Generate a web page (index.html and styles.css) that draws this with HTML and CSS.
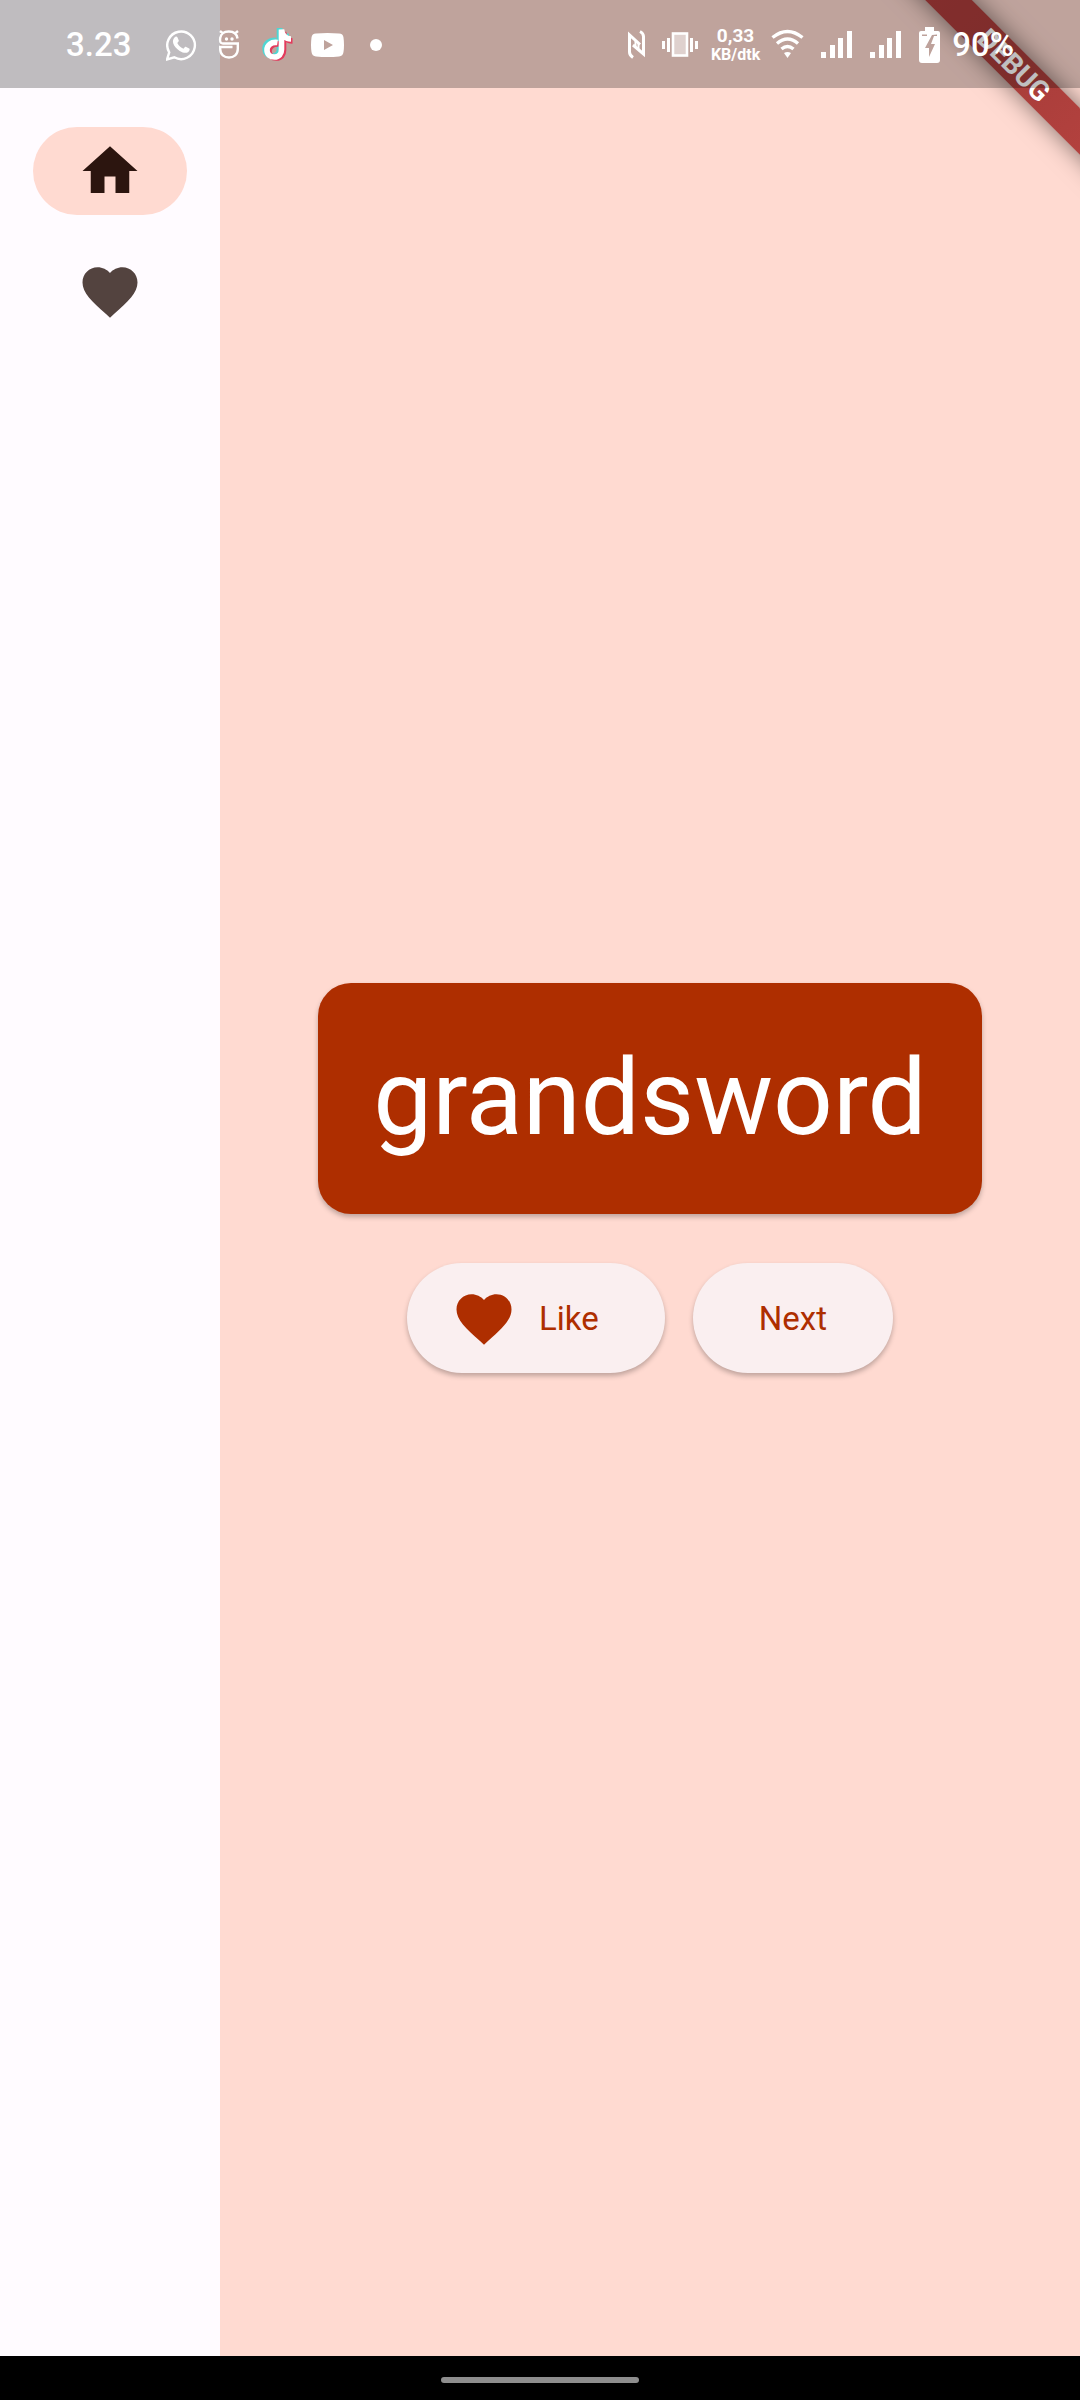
FILE: index.html
```html
<!DOCTYPE html>
<html lang="en">
<head>
<meta charset="utf-8">
<meta name="viewport" content="width=device-width, initial-scale=1">
<title>Namer App</title>
<link rel="stylesheet" href="styles.css">
</head>
<body>
<div class="app">
  <nav class="rail" aria-label="Main">
    <button class="rail-item selected" type="button" aria-label="Home">
      <svg class="icon" viewBox="0 0 24 24"><path d="M10 20v-6h4v6h5v-8h3L12 3 2 12h3v8z"/></svg>
    </button>
    <button class="rail-item" type="button" aria-label="Favorites">
      <svg class="icon" viewBox="0 0 24 24"><path d="M12 21.350l-1.450-1.320C5.400 15.360 2 12.280 2 8.500 2 5.420 4.420 3 7.500 3c1.740 0 3.410.810 4.500 2.090C13.090 3.810 14.760 3 16.500 3 19.580 3 22 5.420 22 8.500c0 3.780-3.400 6.860-8.550 11.540z"/></svg>
    </button>
  </nav>
  <main class="content">
    <h1 class="word-card">grandsword</h1>
    <div class="actions">
      <button class="button with-icon" type="button">
        <svg class="icon" viewBox="0 0 24 24"><path d="M12 21.350l-1.450-1.320C5.400 15.360 2 12.280 2 8.500 2 5.420 4.420 3 7.500 3c1.740 0 3.410.810 4.500 2.090C13.090 3.810 14.760 3 16.500 3 19.580 3 22 5.420 22 8.500c0 3.780-3.400 6.860-8.550 11.540z"/></svg>
        Like
      </button>
      <button class="button" type="button">Next</button>
    </div>
  </main>
</div>
<footer class="system-nav"><span class="handle"></span></footer>

<div class="ribbon-corner"><span class="ribbon">DEBUG</span></div>

<header class="status-bar">
  <div class="status-left">
    <span class="status-text">3.23</span>
    <div class="notifications">
      <svg width="32" height="34" viewBox="0 0 32 34" fill="none" stroke="#fff">
        <path d="M1 31.500l2.200-7.200A13.800 13.800 0 1 1 8.300 29.300z" stroke-width="2.400"/>
        <path d="M8.500 9.500c1-1.200 2.400-1.200 2.900-.2l1.300 3c.3.800-.1 1.400-1.400 2.700 1.500 2.900 3.500 4.600 6.200 5.700 1.400-1.600 1.800-2.200 2.700-1.800l3 1.500c.9.500.4 2.500-.9 3.500-2.300 1.700-5.400.8-8.600-1-3-1.800-5.600-5-6.400-7.400-.8-2.300-.2-4.600 1.200-6z" fill="#fff" stroke="none"/>
      </svg>
      <svg width="32" height="34" viewBox="0 0 32 34" fill="none" stroke="#fff" stroke-width="2.400">
        <path d="M25 15.500H9C6 15.500 5.800 13 6.200 10c.7-4.500 4-6.500 8.600-6.500s8 2 8.700 7M6 3l3 2.500M24 3l-3 2.500M5 19h13.500M23.800 15.500V21c0 5.500-4 8.500-8.800 8.500S6.200 26.500 6.200 21v-2"/>
        <circle cx="12.500" cy="11" r="1.700" fill="#fff" stroke="none"/><circle cx="18" cy="11" r="1.700" fill="#fff" stroke="none"/>
      </svg>
      <svg width="32" height="34" viewBox="0 0 32 34" fill="none" stroke-width="5.600">
        <path stroke="#4fd6d3" d="M14 12.500C7.500 11.500 3 16 3 20.500 3 25 6 28 10.500 28s7-3.300 7-7.500V0c.5 5.500 4 8.500 9.500 8.500"/>
        <path stroke="#e43a5c" d="M17 16C10.500 15 7 19.500 7 23c0 4.500 3 7 7.500 7s7-3.300 7-7.500V4c.5 5.500 4 9 9 9"/>
        <path stroke="#fff" d="M15.500 14.500C9 13.500 5 17.500 5 22c0 4.500 3 7 7.500 7s7-3.300 7-7.500V1.500c.5 5.500 4 9.500 9.500 9.500"/>
      </svg>
      <svg width="34" height="34" viewBox="0 0 34 34"><path fill="#fff" fill-rule="evenodd" d="M6 5.500Q17.500 4.500 29 5.500 33 5.500 33.500 9.500 34.500 17 33.500 24 33 28 29 28.500 17.500 29.500 6 28.500 2 28 1.500 24 .5 17 1.500 9.500 2 5.500 6 5.500zM14 12v10l9-5z"/></svg>
      <svg width="32" height="34" viewBox="0 0 32 34"><circle cx="16" cy="17" r="6" fill="#fff"/></svg>
    </div>
  </div>
  <div class="status-right">
    <svg width="24" height="34" viewBox="0 0 24 34" fill="none" stroke="#fff" stroke-width="3">
      <path d="M6 29.500C3 27.500 2.500 26 2.500 24V7L13 16.500M13 3.500c3 1.500 3.500 3 3.500 5V26L6 17"/>
      <path d="M8.500 12v6M11.500 15v6" stroke-width="2"/>
    </svg>
    <svg width="38" height="34" viewBox="0 0 38 34" fill="#fff">
      <rect x="11" y="5.500" width="14" height="22" fill-opacity=".5" stroke="#fff" stroke-width="2.600"/>
      <rect x="0" y="13" width="3" height="8"/><rect x="5" y="10" width="3" height="14"/><rect x="28" y="10" width="3" height="14"/><rect x="33" y="13" width="3" height="8"/>
    </svg>
    <div class="net-speed"><span class="rate">0,33</span><span class="unit">KB/dtk</span></div>
    <svg width="39" height="34" viewBox="0 0 39 34" fill="none" stroke="#fff" stroke-width="3.400">
      <path d="M1.500 9.500Q16.500-2.500 31.500 9.500M6 15.500Q16.500 6.500 27 15.500M10.500 21Q16.500 16 22.500 21"/>
      <path d="M13 25Q16.500 23 20 25L16.500 30z" fill="#fff" stroke="none"/>
    </svg>
    <svg width="38" height="34" viewBox="0 0 38 34" fill="#fff"><path d="M0 24h5v6H0zM9 17h5v13H9zM17 10h5v20h-5zM26 3h5v27h-5z"/></svg>
    <svg width="38" height="34" viewBox="0 0 38 34" fill="#fff"><path d="M0 24h5v6H0zM9 17h5v13H9zM17 10h5v20h-5zM26 3h5v27h-5z"/></svg>
    <svg width="22" height="36" viewBox="0 0 22 36"><path fill="#fff" fill-rule="evenodd" d="M6 0h9v4h4q2 0 2 2v27q0 3-3 3H3q-3 0-3-3V6q0-2 2-2h4zM3 7.500v1.500h5V7.500zM13 8L6 21h4v9l6-13h-4l3-8h3V7.500z"/></svg>
    <span class="status-text">90%</span>
  </div>
</header>
</body>
</html>
```
FILE: styles.css
```css
* {
  box-sizing: border-box;
}

body {
  position: relative;
  display: flex;
  flex-direction: column;
  min-height: 100vh;
  margin: 0;
  font-family: Roboto, "Noto Sans", sans-serif;
  background: #fffbff;
}

button {
  margin: 0;
  border: 0;
  font: inherit;
  cursor: pointer;
}

svg {
  display: block;
  flex: none;
}

.app {
  display: flex;
  flex: 1;
}

.rail {
  display: flex;
  flex: none;
  flex-direction: column;
  align-items: center;
  gap: 33px;
  width: 220px;
  padding-top: 127px;
  background: #fffbff;
}

.rail-item {
  display: flex;
  align-items: center;
  justify-content: center;
  width: 154px;
  height: 88px;
  padding: 0;
  border-radius: 44px;
  background: transparent;
  color: #53433f;
}

.rail-item.selected {
  background: #ffdad1;
  color: #2c150f;
}

.icon {
  width: 66px;
  height: 66px;
  fill: currentColor;
}

.content {
  display: flex;
  flex: 1;
  flex-direction: column;
  align-items: center;
  justify-content: center;
  gap: 49px;
  background: #ffdad1;
}

.word-card {
  margin: 0;
  padding: 55px;
  border-radius: 33px;
  background: #ae2e00;
  box-shadow: 0 3px 5px rgba(0, 0, 0, 0.25);
  color: #fff;
  font-size: 105px;
  font-weight: 400;
  line-height: 121px;
}

.actions {
  display: flex;
  gap: 28px;
}

.button {
  display: flex;
  align-items: center;
  gap: 22px;
  height: 110px;
  padding: 1px 66px 0;
  border-radius: 55px;
  background: #faeff0;
  box-shadow: 0 3px 5px rgba(0, 0, 0, 0.25);
  color: #ae2e00;
  font-size: 33px;
  line-height: 48px;
}

.button.with-icon {
  padding-left: 44px;
}

.system-nav {
  display: flex;
  align-items: center;
  justify-content: center;
  height: 44px;
  padding-top: 4px;
  background: #000;
}

.handle {
  width: 198px;
  height: 6px;
  border-radius: 3px;
  background: #8e8e8e;
}

.ribbon-corner {
  position: absolute;
  top: 0;
  right: 0;
  width: 240px;
  height: 240px;
  overflow: hidden;
  pointer-events: none;
}

.ribbon {
  position: absolute;
  top: 49px;
  right: -94px;
  width: 320px;
  background: linear-gradient(90deg, #b23c3c, #a83d3a 50%, #b84340);
  box-shadow: 0 0 24px rgba(0, 0, 0, 0.5);
  color: #fff;
  font-size: 28px;
  font-weight: 700;
  line-height: 33px;
  text-align: center;
  transform: rotate(45deg);
}

.status-bar {
  position: absolute;
  top: 0;
  left: 0;
  display: flex;
  align-items: center;
  justify-content: space-between;
  width: 100%;
  height: 88px;
  padding: 2px 66px 0;
  background: rgba(0, 0, 0, 0.25);
  color: #fff;
}

.status-left {
  display: flex;
  align-items: center;
  gap: 35px;
}

.notifications {
  display: flex;
  align-items: center;
  gap: 16px;
}

.status-right {
  display: flex;
  align-items: center;
  gap: 11px;
}

.status-text {
  font-size: 33px;
  font-weight: 500;
  line-height: 40px;
}

.net-speed {
  display: flex;
  flex-direction: column;
  align-items: center;
  font-weight: 700;
  line-height: 19px;
}

.rate {
  font-size: 19px;
}

.unit {
  font-size: 16px;
}
```
